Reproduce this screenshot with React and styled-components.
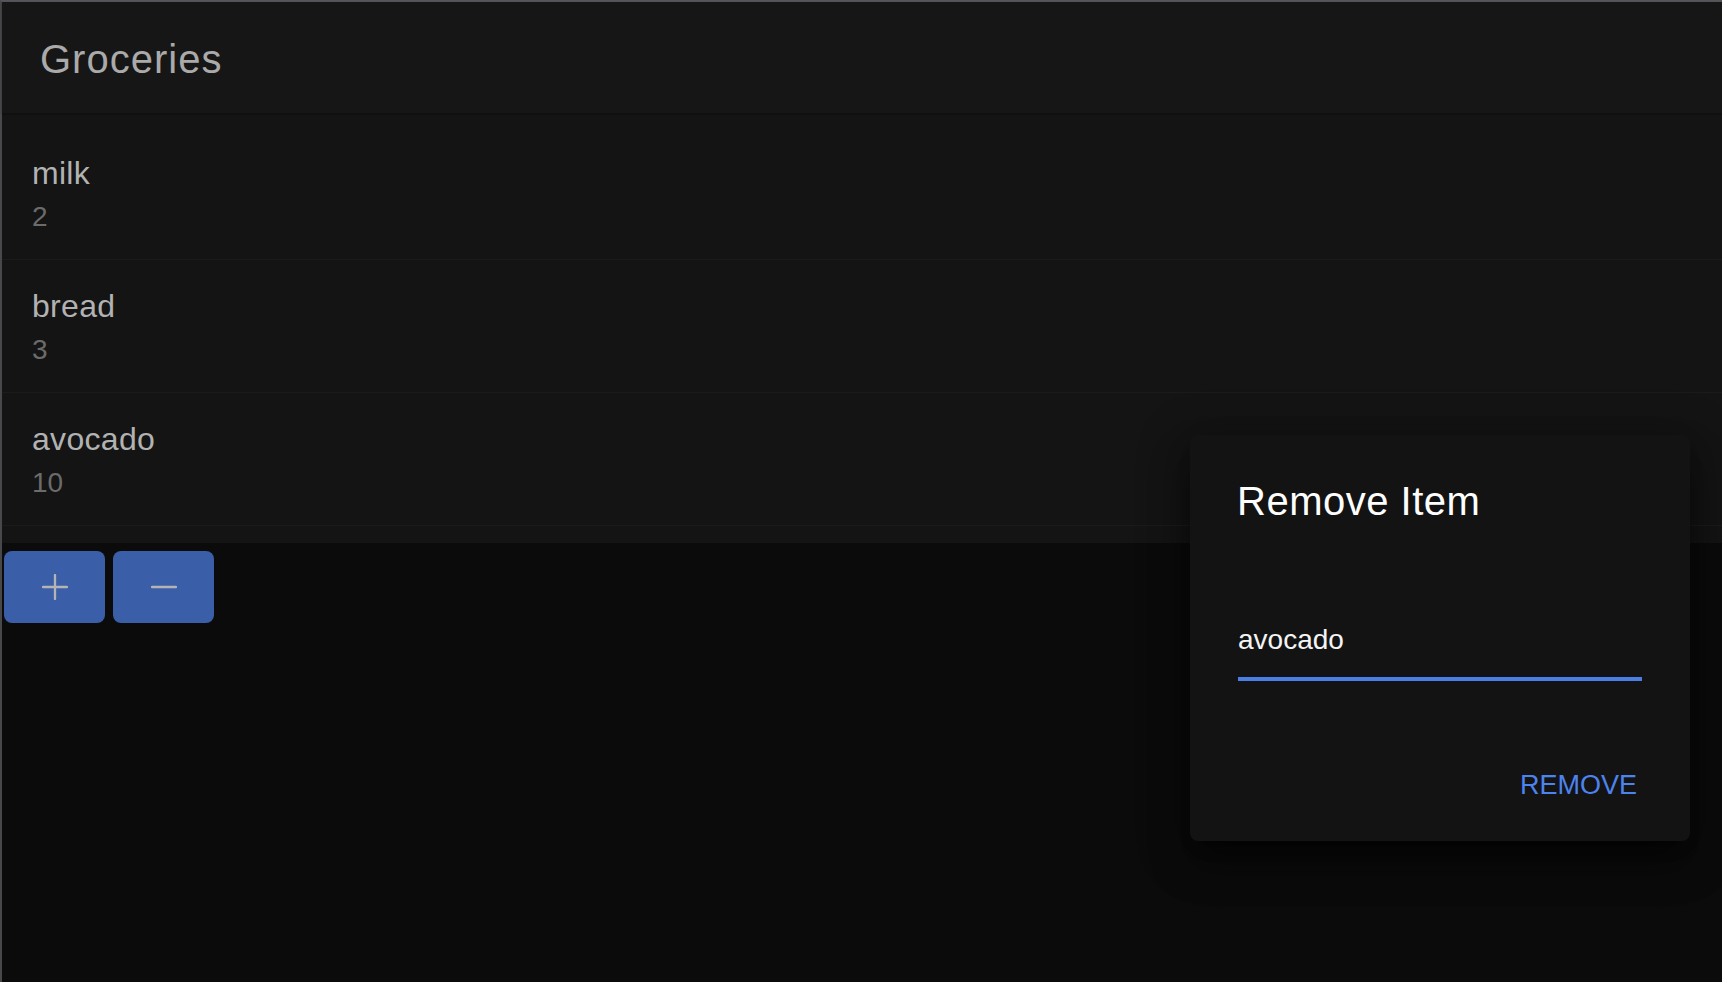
import React from "react";
import styled, { createGlobalStyle } from "styled-components";

const GlobalStyle = createGlobalStyle`
  html, body {
    margin: 0;
    padding: 0;
    background: #0b0b0b;
  }
  body {
    font-family: "Liberation Sans", Arial, Helvetica, sans-serif;
    -webkit-font-smoothing: antialiased;
  }
  * {
    box-sizing: border-box;
  }
`;

const Screen = styled.div`
  position: relative;
  min-height: 100vh;
  background: #0b0b0b;
  border-top: 2px solid #56565a;
  border-left: 2px solid #48484b;
`;

const Toolbar = styled.header`
  height: 111px;
  display: flex;
  align-items: center;
  padding: 4px 0 0 38px;
  background: #161616;
  box-shadow: 0 1px 2px rgba(0, 0, 0, 0.35);
  position: relative;
  z-index: 1;
`;

const Title = styled.h1`
  margin: 0;
  font-size: 40px;
  font-weight: 500;
  letter-spacing: 1px;
  color: #aaaaaa;
`;

const List = styled.ul`
  list-style: none;
  margin: 0;
  padding: 14px 0 17px;
  background: #141414;
`;

const Row = styled.li`
  display: flex;
  flex-direction: column;
  gap: 8px;
  padding: 27px 0 25px 30px;
  border-bottom: 1px solid #1b1b1b;
`;

const Label = styled.span`
  font-size: 32px;
  line-height: 38px;
  letter-spacing: 0.3px;
  color: #b2b2b2;
`;

const Note = styled.span`
  font-size: 28px;
  line-height: 34px;
  color: #6b6b6b;
`;

const Actions = styled.div`
  display: flex;
  gap: 8px;
  padding: 8px 0 0 2px;
`;

const IconButton = styled.button`
  width: 101px;
  height: 72px;
  display: flex;
  align-items: center;
  justify-content: center;
  padding: 0;
  border: 0;
  border-radius: 8px;
  background: #3b5ea8;
  cursor: pointer;
`;

const Dialog = styled.div`
  position: absolute;
  left: 1188px;
  top: 433px;
  width: 500px;
  display: flex;
  flex-direction: column;
  padding: 42px 48px 19px;
  background: #131313;
  border-radius: 8px;
  box-shadow: 0 11px 15px -7px rgba(0, 0, 0, 0.4),
    0 24px 38px 3px rgba(0, 0, 0, 0.3), 0 9px 46px 8px rgba(0, 0, 0, 0.26);
`;

const DialogTitle = styled.h2`
  margin: 0 0 97px -1px;
  font-size: 40px;
  line-height: 48px;
  font-weight: 500;
  letter-spacing: 0.5px;
  color: #ffffff;
`;

const Field = styled.input`
  display: block;
  width: 100%;
  height: 36px;
  padding: 0 0 19px;
  border: 0;
  border-bottom: 4px solid #4c7fe6;
  background: transparent;
  color: #f4f4f4;
  font-family: inherit;
  font-size: 28px;
  outline: none;
  box-sizing: content-box;
`;

const DialogActions = styled.div`
  display: flex;
  justify-content: flex-end;
  margin: 67px -15px 0 0;
`;

const TextButton = styled.button`
  padding: 20px;
  border: 0;
  background: none;
  font-family: inherit;
  font-size: 27px;
  line-height: 34px;
  font-weight: 500;
  text-transform: uppercase;
  color: #4d83ee;
  cursor: pointer;
`;

const PlusIcon = () => (
  <svg width="26" height="26" viewBox="0 0 26 26" fill="none">
    <path d="M1 13h24M13 1v24" stroke="#b4b4b4" strokeWidth="2.3" strokeLinecap="round" />
  </svg>
);

const MinusIcon = () => (
  <svg width="26" height="26" viewBox="0 0 26 26" fill="none">
    <path d="M1 13h24" stroke="#b4b4b4" strokeWidth="2.3" strokeLinecap="round" />
  </svg>
);

const items = [
  { name: "milk", qty: 2 },
  { name: "bread", qty: 3 },
  { name: "avocado", qty: 10 },
];

export default function App() {
  return (
    <>
      <GlobalStyle />
      <Screen>
        <Toolbar>
          <Title>Groceries</Title>
        </Toolbar>
        <List>
          {items.map((item) => (
            <Row key={item.name}>
              <Label>{item.name}</Label>
              <Note>{item.qty}</Note>
            </Row>
          ))}
        </List>
        <Actions>
          <IconButton aria-label="Add item">
            <PlusIcon />
          </IconButton>
          <IconButton aria-label="Remove item">
            <MinusIcon />
          </IconButton>
        </Actions>
        <Dialog role="dialog">
          <DialogTitle>Remove Item</DialogTitle>
          <Field defaultValue="avocado" />
          <DialogActions>
            <TextButton>Remove</TextButton>
          </DialogActions>
        </Dialog>
      </Screen>
    </>
  );
}
